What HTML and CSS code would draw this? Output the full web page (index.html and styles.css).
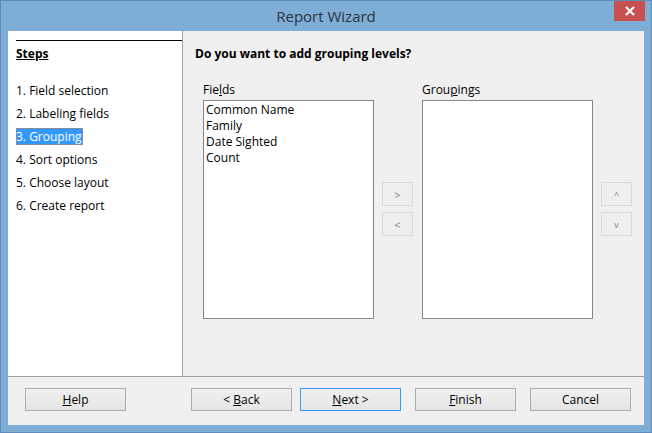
FILE: index.html
```html
<!DOCTYPE html>
<html>
<head>
<meta charset="utf-8">
<link rel="stylesheet" href="styles.css">
</head>
<body>
<div class="window">
  <div class="titlebar">
    <span class="title">Report Wizard</span>
    <div class="close"><svg width="12" height="10" viewBox="0 0 12 10"><path d="M2 1 L10 9 M10 1 L2 9" stroke="#fff" stroke-width="2.2" fill="none"/></svg></div>
  </div>
  <div class="client">
    <div class="main">
      <div class="steps">
        <div class="steps-head">Steps</div>
        <ul class="step-list">
          <li>1. Field selection</li>
          <li>2. Labeling fields</li>
          <li><span class="sel">3. Grouping</span></li>
          <li>4. Sort options</li>
          <li>5. Choose layout</li>
          <li>6. Create report</li>
        </ul>
      </div>
      <div class="page">
        <div class="question">Do you want to add grouping levels?</div>
        <div class="columns">
          <div class="col">
            <div class="label">Fie<u>l</u>ds</div>
            <div class="listbox">
              <div>Common Name</div>
              <div>Family</div>
              <div>Date Sighted</div>
              <div>Count</div>
            </div>
          </div>
          <div class="btncol">
            <div class="sbtn">&gt;</div>
            <div class="sbtn">&lt;</div>
          </div>
          <div class="col">
            <div class="label">Grou<u>p</u>ings</div>
            <div class="listbox"></div>
          </div>
          <div class="btncol">
            <div class="sbtn small">^</div>
            <div class="sbtn small">v</div>
          </div>
        </div>
      </div>
    </div>
    <div class="footer">
      <div class="btn help"><span><u>H</u>elp</span></div>
      <div class="btn back"><span>&lt; <u>B</u>ack</span></div>
      <div class="btn next default"><span><u>N</u>ext &gt;</span></div>
      <div class="btn finish"><span><u>F</u>inish</span></div>
      <div class="btn cancel"><span>Cancel</span></div>
    </div>
  </div>
</div>
</body>
</html>
```

FILE: styles.css
```css
html, body {
  margin: 0;
  padding: 0;
}
body {
  font-family: "Open Sans", "Noto Sans", sans-serif;
  font-size: 12px;
  color: #000;
  background: #7eadd6;
}
.window {
  position: relative;
  box-sizing: border-box;
  width: 652px;
  height: 433px;
  background: #7eadd6;
  border: 1px solid #5f8cba;
  display: flex;
  flex-direction: column;
}
.titlebar {
  height: 30px;
  display: flex;
  align-items: center;
  justify-content: center;
}
.title {
  font-size: 15px;
  color: #2b3440;
  margin-top: -1px;
}
.close {
  position: absolute;
  top: 0;
  left: 613px;
  width: 31px;
  height: 20px;
  background: #c75050;
  display: flex;
  align-items: center;
  justify-content: center;
}
.client {
  margin: 0 7px 0 7px;
  height: 394px;
  background: #f0f0f0;
  display: flex;
  flex-direction: column;
}
.main {
  height: 345px;
  display: flex;
}
.steps {
  width: 175px;
  background: #fff;
  border-right: 1px solid #a0a0a0;
  padding-top: 9px;
  padding-left: 8px;
  box-sizing: border-box;
}
.steps-head {
  border-top: 1px solid #000;
  font-weight: bold;
  text-decoration: underline;
  line-height: 16px;
  padding-top: 5px;
}
.step-list {
  list-style: none;
  margin: 20px 0 0 0;
  padding: 0;
}
.step-list li {
  height: 23px;
  line-height: 17px;
}
.sel {
  display: inline-block;
  background: #3399ff;
  color: #fff;
  outline: 1px dotted #d08040;
  outline-offset: -1px;
  padding-right: 1px;
}
.page {
  flex: 1;
  padding-left: 12px;
  padding-top: 15px;
}
.question {
  font-weight: bold;
  line-height: 16px;
}
.columns {
  display: flex;
  margin-top: 20px;
  margin-left: 8px;
}
.col {
  display: flex;
  flex-direction: column;
  width: 171px;
}
.label {
  line-height: 16px;
  margin-bottom: 2px;
}
.listbox {
  box-sizing: border-box;
  height: 219px;
  background: #fff;
  border: 1px solid #828790;
  padding: 1px 2px;
  line-height: 16px;
}
.btncol {
  width: 31px;
  margin: 0 9px 0 8px;
  padding-top: 100px;
  display: flex;
  flex-direction: column;
  gap: 6px;
}
.sbtn {
  box-sizing: border-box;
  height: 24px;
  border: 1px solid #d9d9d9;
  background: #efefef;
  color: #7a808c;
  font-size: 11px;
  display: flex;
  align-items: center;
  justify-content: center;
}
.sbtn.small {
  font-size: 9px;
}
.footer {
  flex: 1;
  border-top: 1px solid #a0a0a0;
  display: flex;
  align-items: flex-start;
  padding-top: 11px;
  padding-left: 17px;
}
.btn {
  box-sizing: border-box;
  width: 101px;
  height: 23px;
  border: 1px solid #acacac;
  background: linear-gradient(#f0f0f0, #e5e5e5);
  display: flex;
  align-items: center;
  justify-content: center;
}
.btn.default {
  border-color: #3399ff;
}
.back { margin-left: 65px; }
.next { margin-left: 8px; }
.finish { margin-left: 14px; }
.cancel { margin-left: 14px; }
```
